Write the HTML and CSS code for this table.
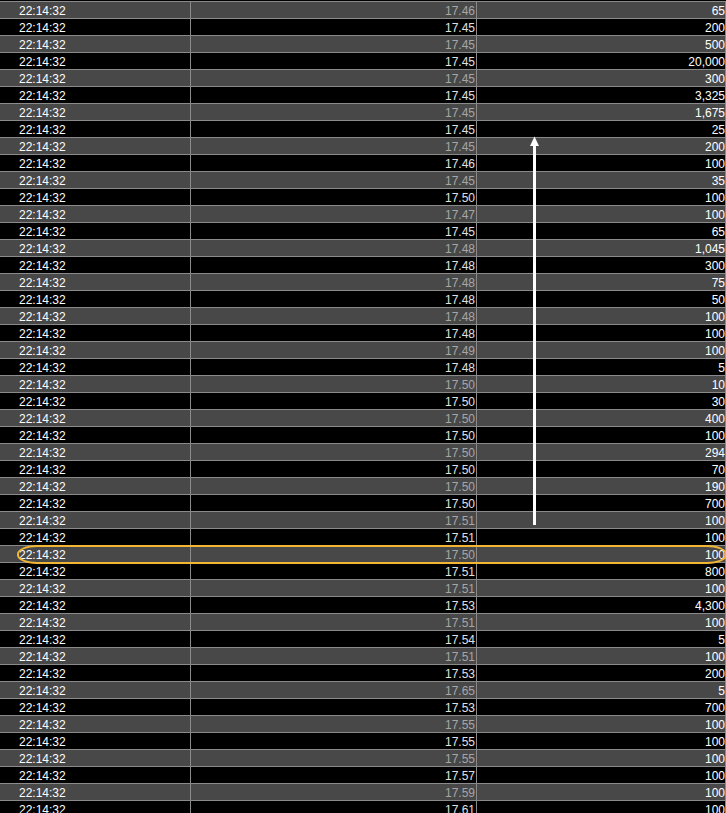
FILE: index.html
```html
<!DOCTYPE html>
<html lang="en">
  <head>
    <meta charset="UTF-8" />
    <title>Time &amp; Sales</title>
    <link rel="stylesheet" href="styles.css">
  </head>
  <body>
    <main class="tape">
      <div class="row"><span class="time">22:14:32</span><span class="price">17.46</span><span class="size">65</span></div>
      <div class="row"><span class="time">22:14:32</span><span class="price">17.45</span><span class="size">200</span></div>
      <div class="row"><span class="time">22:14:32</span><span class="price">17.45</span><span class="size">500</span></div>
      <div class="row"><span class="time">22:14:32</span><span class="price">17.45</span><span class="size">20,000</span></div>
      <div class="row"><span class="time">22:14:32</span><span class="price">17.45</span><span class="size">300</span></div>
      <div class="row"><span class="time">22:14:32</span><span class="price">17.45</span><span class="size">3,325</span></div>
      <div class="row"><span class="time">22:14:32</span><span class="price">17.45</span><span class="size">1,675</span></div>
      <div class="row"><span class="time">22:14:32</span><span class="price">17.45</span><span class="size">25</span></div>
      <div class="row"><span class="time">22:14:32</span><span class="price">17.45</span><span class="size">200</span></div>
      <div class="row"><span class="time">22:14:32</span><span class="price">17.46</span><span class="size">100</span></div>
      <div class="row"><span class="time">22:14:32</span><span class="price">17.45</span><span class="size">35</span></div>
      <div class="row"><span class="time">22:14:32</span><span class="price">17.50</span><span class="size">100</span></div>
      <div class="row"><span class="time">22:14:32</span><span class="price">17.47</span><span class="size">100</span></div>
      <div class="row"><span class="time">22:14:32</span><span class="price">17.45</span><span class="size">65</span></div>
      <div class="row"><span class="time">22:14:32</span><span class="price">17.48</span><span class="size">1,045</span></div>
      <div class="row"><span class="time">22:14:32</span><span class="price">17.48</span><span class="size">300</span></div>
      <div class="row"><span class="time">22:14:32</span><span class="price">17.48</span><span class="size">75</span></div>
      <div class="row"><span class="time">22:14:32</span><span class="price">17.48</span><span class="size">50</span></div>
      <div class="row"><span class="time">22:14:32</span><span class="price">17.48</span><span class="size">100</span></div>
      <div class="row"><span class="time">22:14:32</span><span class="price">17.48</span><span class="size">100</span></div>
      <div class="row"><span class="time">22:14:32</span><span class="price">17.49</span><span class="size">100</span></div>
      <div class="row"><span class="time">22:14:32</span><span class="price">17.48</span><span class="size">5</span></div>
      <div class="row"><span class="time">22:14:32</span><span class="price">17.50</span><span class="size">10</span></div>
      <div class="row"><span class="time">22:14:32</span><span class="price">17.50</span><span class="size">30</span></div>
      <div class="row"><span class="time">22:14:32</span><span class="price">17.50</span><span class="size">400</span></div>
      <div class="row"><span class="time">22:14:32</span><span class="price">17.50</span><span class="size">100</span></div>
      <div class="row"><span class="time">22:14:32</span><span class="price">17.50</span><span class="size">294</span></div>
      <div class="row"><span class="time">22:14:32</span><span class="price">17.50</span><span class="size">70</span></div>
      <div class="row"><span class="time">22:14:32</span><span class="price">17.50</span><span class="size">190</span></div>
      <div class="row"><span class="time">22:14:32</span><span class="price">17.50</span><span class="size">700</span></div>
      <div class="row"><span class="time">22:14:32</span><span class="price">17.51</span><span class="size">100</span></div>
      <div class="row"><span class="time">22:14:32</span><span class="price">17.51</span><span class="size">100</span></div>
      <div class="row"><span class="time">22:14:32</span><span class="price">17.50</span><span class="size">100</span></div>
      <div class="row"><span class="time">22:14:32</span><span class="price">17.51</span><span class="size">800</span></div>
      <div class="row"><span class="time">22:14:32</span><span class="price">17.51</span><span class="size">100</span></div>
      <div class="row"><span class="time">22:14:32</span><span class="price">17.53</span><span class="size">4,300</span></div>
      <div class="row"><span class="time">22:14:32</span><span class="price">17.51</span><span class="size">100</span></div>
      <div class="row"><span class="time">22:14:32</span><span class="price">17.54</span><span class="size">5</span></div>
      <div class="row"><span class="time">22:14:32</span><span class="price">17.51</span><span class="size">100</span></div>
      <div class="row"><span class="time">22:14:32</span><span class="price">17.53</span><span class="size">200</span></div>
      <div class="row"><span class="time">22:14:32</span><span class="price">17.65</span><span class="size">5</span></div>
      <div class="row"><span class="time">22:14:32</span><span class="price">17.53</span><span class="size">700</span></div>
      <div class="row"><span class="time">22:14:32</span><span class="price">17.55</span><span class="size">100</span></div>
      <div class="row"><span class="time">22:14:32</span><span class="price">17.55</span><span class="size">100</span></div>
      <div class="row"><span class="time">22:14:32</span><span class="price">17.55</span><span class="size">100</span></div>
      <div class="row"><span class="time">22:14:32</span><span class="price">17.57</span><span class="size">100</span></div>
      <div class="row"><span class="time">22:14:32</span><span class="price">17.59</span><span class="size">100</span></div>
      <div class="row"><span class="time">22:14:32</span><span class="price">17.61</span><span class="size">100</span></div>

      <!-- annotations drawn over the tape -->
      <div class="mark"></div>
      <svg class="arrow" width="11" height="389" viewBox="0 0 11 389">
        <polygon points="5.5,0.5 10,10 1,10" fill="#fff" />
        <rect x="4" y="9" width="3" height="380" fill="#fff" />
      </svg>
    </main>
  </body>
</html>
```

FILE: styles.css
```css
html,
body {
  margin: 0;
  padding: 0;
  background-color: #000;
  overflow: hidden;
}
.tape {
  position: relative;
  width: 726px;
  padding-top: 1px;
  font-family: "Liberation Sans", Arial, sans-serif;
  font-size: 12px;
  color: #fff;
}
.row {
  display: grid;
  grid-template-columns: 191px 286px 249px;
  height: 16px;
  line-height: 18px;
  border-top: 1px solid #8a8a8a;
}
.row:nth-child(odd) {
  background-color: #484848;
}
.row:nth-child(even) {
  background-color: #000;
}
.row span {
  height: 16px;
  border-right: 1px solid #8a8a8a;
  white-space: nowrap;
  overflow: hidden;
}
.time {
  padding-left: 19px;
}
.price {
  text-align: right;
  padding-right: 1px;
}
.row:nth-child(odd) .price {
  color: #a6a6a6;
}
.row:nth-child(even) .price {
  color: #e0e0e0;
}
.size {
  text-align: right;
}
.mark {
  position: absolute;
  left: 17px;
  top: 545px;
  width: 706px;
  height: 15px;
  border: 2px solid #f3b634;
  border-radius: 20px / 9px;
}
.arrow {
  position: absolute;
  left: 529px;
  top: 136px;
}
```
